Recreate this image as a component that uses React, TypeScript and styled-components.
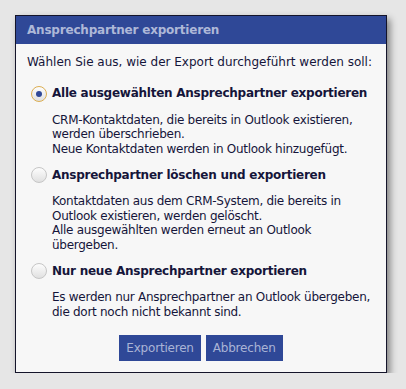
import React, { useState } from "react";
import styled, { createGlobalStyle } from "styled-components";

type ExportMode = "all" | "replace" | "new";

const GlobalStyle = createGlobalStyle`
  html, body {
    margin: 0;
    padding: 0;
    background: #e6e6e6;
  }
  body {
    font-family: "DejaVu Sans", Verdana, sans-serif;
  }
`;

const Page = styled.div`
  padding: 15px 0 0 15px;
`;

const Dialog = styled.div`
  box-sizing: border-box;
  width: 372px;
  height: 358px;
  border: 1px solid #14142a;
  background: #f7f7f7;
  box-shadow: 3px 4px 7px rgba(0, 0, 0, 0.45);
  display: flex;
  flex-direction: column;
`;

const Header = styled.div`
  height: 28px;
  background: #2f4897;
  color: #aeb8d8;
  font-weight: 700;
  font-size: 12px;
  letter-spacing: -0.2px;
  line-height: 28px;
  padding-left: 11px;
`;

const Body = styled.div`
  padding: 11px 0 0 11px;
  color: #15153a;
  font-size: 12px;
  line-height: 14.5px;
  white-space: nowrap;
`;

const Intro = styled.div`
  margin-bottom: 15px;
`;

const Option = styled.label`
  display: flex;
  align-items: center;
  gap: 5px;
  margin-left: 4px;
  height: 18px;
  cursor: pointer;
  font-weight: 700;
  letter-spacing: -0.25px;
`;

const Radio = styled.span<{ $checked: boolean }>`
  box-sizing: border-box;
  width: 16px;
  height: 16px;
  border-radius: 50%;
  border: 1px solid ${({ $checked }) => ($checked ? "#dcae52" : "#c6c6c6")};
  background: linear-gradient(#fdfdfd, #e0e0e0);
  display: flex;
  align-items: center;
  justify-content: center;

  &::after {
    content: "";
    width: 6px;
    height: 6px;
    border-radius: 50%;
    background: #2f4897;
    display: ${({ $checked }) => ($checked ? "block" : "none")};
  }
`;

const Description = styled.p`
  margin: 10px 0 10px 25px;
  letter-spacing: -0.28px;
`;

const Buttons = styled.div`
  display: flex;
  justify-content: center;
  gap: 5px;
  margin: 16px 0 0 -11px;
`;

const Button = styled.button`
  height: 26px;
  padding: 0 7px;
  border: none;
  background: #2f4897;
  color: #aab4d6;
  font-family: "DejaVu Sans", Verdana, sans-serif;
  font-size: 12px;
  letter-spacing: -0.2px;
  cursor: pointer;
`;

const options: { id: ExportMode; label: string; lines: string[] }[] = [
  {
    id: "all",
    label: "Alle ausgewählten Ansprechpartner exportieren",
    lines: [
      "CRM-Kontaktdaten, die bereits in Outlook existieren,",
      "werden überschrieben.",
      "Neue Kontaktdaten werden in Outlook hinzugefügt.",
    ],
  },
  {
    id: "replace",
    label: "Ansprechpartner löschen und exportieren",
    lines: [
      "Kontaktdaten aus dem CRM-System, die bereits in",
      "Outlook existieren, werden gelöscht.",
      "Alle ausgewählten werden erneut an Outlook",
      "übergeben.",
    ],
  },
  {
    id: "new",
    label: "Nur neue Ansprechpartner exportieren",
    lines: [
      "Es werden nur Ansprechpartner an Outlook übergeben,",
      "die dort noch nicht bekannt sind.",
    ],
  },
];

export default function App() {
  const [mode, setMode] = useState<ExportMode>("all");

  return (
    <Page>
      <GlobalStyle />
      <Dialog>
        <Header>Ansprechpartner exportieren</Header>
        <Body>
          <Intro>Wählen Sie aus, wie der Export durchgeführt werden soll:</Intro>
          {options.map((o) => (
            <div key={o.id}>
              <Option onClick={() => setMode(o.id)}>
                <Radio $checked={mode === o.id} />
                {o.label}
              </Option>
              <Description>
                {o.lines.map((l, i) => (
                  <React.Fragment key={i}>
                    {i > 0 && <br />}
                    {l}
                  </React.Fragment>
                ))}
              </Description>
            </div>
          ))}
          <Buttons>
            <Button>Exportieren</Button>
            <Button>Abbrechen</Button>
          </Buttons>
        </Body>
      </Dialog>
    </Page>
  );
}
